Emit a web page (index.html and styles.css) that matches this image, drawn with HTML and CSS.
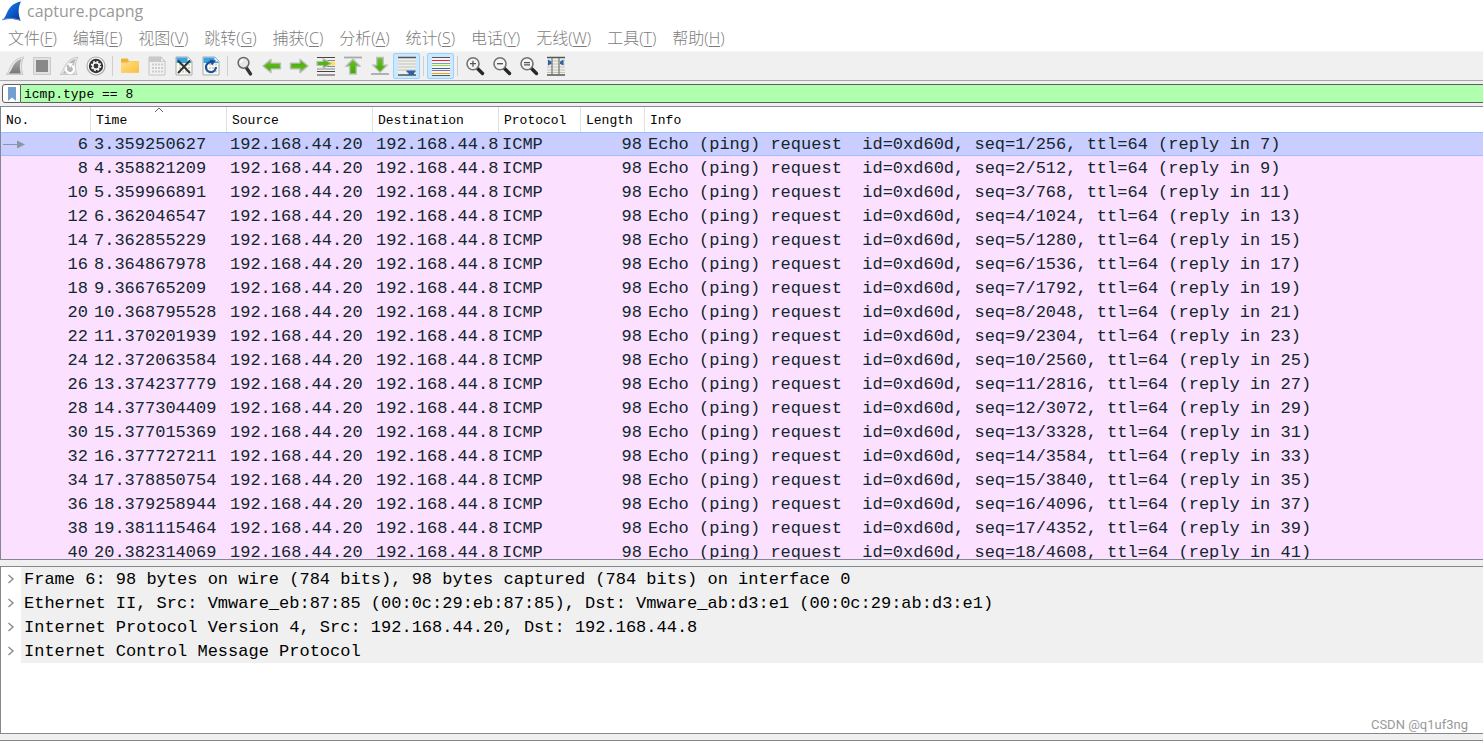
FILE: index.html
```html
<!DOCTYPE html>
<html lang="zh-CN">
<head>
<meta charset="utf-8">
<title>capture.pcapng</title>
<link rel="stylesheet" href="styles.css">
</head>
<body>
<svg class="defs" aria-hidden="true">
  <defs>
    <linearGradient id="blue" x1="0" y1="0" x2="1" y2="1"><stop offset="0" stop-color="#2a8cf0"/><stop offset=".6" stop-color="#0b57c8"/><stop offset="1" stop-color="#06308c"/></linearGradient>
    <linearGradient id="grey" x1="0" y1="0" x2="0" y2="1"><stop offset="0" stop-color="#adadad"/><stop offset="1" stop-color="#777"/></linearGradient>
    <linearGradient id="gold" x1="0" y1="0" x2="1" y2="1"><stop offset="0" stop-color="#ffe08a"/><stop offset="1" stop-color="#fbbf3c"/></linearGradient>
    <linearGradient id="green" x1="0" y1="0" x2="0" y2="1"><stop offset="0" stop-color="#6cc02c"/><stop offset="1" stop-color="#3fa800"/></linearGradient>
    <g id="digits" fill="none" stroke-width="2"><path d="M5 8.5h11M5 12h11M5 15.5h11" stroke-dasharray="2 1"/></g>
    <g id="page"><path d="M2 1h12l4 4v14H2z" fill="#fbfbf1" stroke="#aaa"/><path d="M2.5 1.5h11.3l3.7 3.7V7h-15z" fill="#39a5df"/><path d="M13.5 1v4.5H18z" fill="#e8f4fb"/><use href="#digits" stroke="#d3d3cc"/></g>
    <g id="lens"><path d="M12.5 12.5l5 5" stroke="#282828" stroke-width="3.4" stroke-linecap="round"/><circle cx="8" cy="7.7" r="6" fill="#f4f4f4" stroke="#747474" stroke-width="1.6"/></g>
    <path id="arrow" d="M1 10L9 3.4v3.7h9.5v5.8H9v3.7z" fill="url(#green)" stroke="#b9beb7" stroke-width="1.4" stroke-linejoin="round"/>
  </defs>
</svg>

<header class="titlebar">
  <svg class="logo" viewBox="0 0 20 20"><path d="M0 19C6 16 4 3 19 0.5C16 6 16 13 18.5 19.5C12 17.5 6 17.5 0 19z" fill="url(#blue)"/><path d="M0 19c6-2.500 12-2 18.500.5" fill="none" stroke="#6b89bd" stroke-width="1"/></svg>
  <h1 class="title">capture.pcapng</h1>
</header>

<nav class="menubar">
  <button class="menu">文件(<u>F</u>)</button>
  <button class="menu">编辑(<u>E</u>)</button>
  <button class="menu">视图(<u>V</u>)</button>
  <button class="menu">跳转(<u>G</u>)</button>
  <button class="menu">捕获(<u>C</u>)</button>
  <button class="menu">分析(<u>A</u>)</button>
  <button class="menu">统计(<u>S</u>)</button>
  <button class="menu">电话(<u>Y</u>)</button>
  <button class="menu">无线(<u>W</u>)</button>
  <button class="menu">工具(<u>T</u>)</button>
  <button class="menu">帮助(<u>H</u>)</button>
</nav>

<div class="toolbar" role="toolbar">
  <button class="tool" aria-label="Start capture"><svg viewBox="0 0 20 20"><path d="M1 18.500C5.500 15 5 3 19 1C15.500 7 16 13 18 18.500z" fill="#e6e6e6" stroke="#c9c9c9"/><path d="M3.500 17.500C8 14 7 6 16.500 3C14.200 8 14.500 13 15.800 17.500z" fill="url(#grey)"/></svg></button>
  <button class="tool" aria-label="Stop capture"><svg viewBox="0 0 20 20"><path d="M1.500 1.500h17v17h-17z" fill="#e2e2e2" stroke="#c9c9c9"/><path d="M4 4h12v12H4z" fill="#888"/></svg></button>
  <button class="tool" aria-label="Restart capture"><svg viewBox="0 0 20 20"><path d="M1 18.500C5.500 15 5 3 19 1C15.500 7 16 13 18 18.500z" fill="#e6e6e6" stroke="#c9c9c9"/><path d="M3.500 17.500C8 14 7 6 16.500 3C14.200 8 14.500 13 15.800 17.500z" fill="#b5b5b5"/><path d="M7.600 11a4 4 0 1 0 5.500-1.200" fill="none" stroke="#fff" stroke-width="2.200"/><path d="M8.500 7.500l5.500-.5-2.500 5z" fill="#fff"/></svg></button>
  <button class="tool" aria-label="Capture options"><svg viewBox="0 0 20 20"><circle cx="10" cy="10" r="9" fill="#fafafa" stroke="#a9a9a9" stroke-width="1.200"/><circle cx="10" cy="10" r="7.200" fill="#333"/><circle cx="10" cy="10" r="4" fill="none" stroke="#f4f4f4" stroke-width="2.600" stroke-dasharray="1.600 1.542"/><circle cx="10" cy="10" r="3.200" fill="none" stroke="#f4f4f4" stroke-width="1.500"/><circle cx="10" cy="10" r="2" fill="#3b3b3b"/></svg></button>
  <span class="sep"></span>
  <button class="tool" aria-label="Open"><svg viewBox="0 0 20 20"><path d="M1 3.500Q1 2.500 2 2.500h5.500L9 5h9q1 0 1 1v10.500H1z" fill="#efb234"/><path d="M1 6.500h6l2-1.200h10v11.200H1z" fill="url(#gold)"/></svg></button>
  <button class="tool" aria-label="Save"><svg viewBox="0 0 20 20"><path d="M2 1h12l4 4v14H2z" fill="#f2f2f2" stroke="#c4c4c4"/><path d="M2 1h12v5H2z" fill="#c9c9c9"/><path d="M13.500 1v4.500H18z" fill="#eee" stroke="#bbb" stroke-width=".6"/><use href="#digits" stroke="#ccc"/></svg></button>
  <button class="tool" aria-label="Close"><svg viewBox="0 0 20 20"><use href="#page"/><path d="M4.500 5l11 11.500M15.500 5l-11 11.500" stroke="#2d3436" stroke-width="2" stroke-linecap="round"/></svg></button>
  <button class="tool" aria-label="Reload"><svg viewBox="0 0 20 20"><use href="#page"/><path d="M11 6.300A5 5 0 1 0 14.900 11" fill="none" stroke="#1d4e9e" stroke-width="2.100"/><path d="M8.500 3.500l6.500 1-4 5z" fill="#1d4e9e"/></svg></button>
  <span class="sep"></span>
  <button class="tool" aria-label="Find"><svg viewBox="0 0 20 20"><path d="M11.500 12l4 6" stroke="#333" stroke-width="3.200" stroke-linecap="round"/><circle cx="8.500" cy="6.800" r="5.400" fill="#e6e6e6" stroke="#666" stroke-width="1.500"/><path d="M5.500 7a3.200 3.200 0 0 1 3-3" stroke="#fff" stroke-width="1.500" fill="none"/></svg></button>
  <button class="tool" aria-label="Previous packet"><svg viewBox="0 0 20 20"><use href="#arrow"/></svg></button>
  <button class="tool" aria-label="Next packet"><svg viewBox="0 0 20 20"><use href="#arrow" transform="rotate(180 10 10)"/></svg></button>
  <button class="tool" aria-label="Go to packet"><svg viewBox="0 0 20 20"><path d="M1 1.500h18M1 15.500h18M1 19h18" stroke="#444" stroke-width="1.200"/><path d="M11 4.500h8M11 10.500h8M1 13h18" stroke="#888"/><path d="M13 7.500h6" stroke="#ffe14a" stroke-width="3.500"/><path d="M1 5.500h6V2.500l8 5-8 5V9.500H1z" fill="#54b516" stroke="#b9beb7" stroke-width="1.200"/></svg></button>
  <button class="tool" aria-label="First packet"><svg viewBox="0 0 20 20"><path d="M1 1.500h18" stroke="#aaa" stroke-width="1.800"/><path d="M10 3.200l7 7h-3.800V18H6.800v-7.800H3z" fill="url(#green)" stroke="#b9beb7" stroke-width="1.300"/></svg></button>
  <button class="tool" aria-label="Last packet"><svg viewBox="0 0 20 20"><path d="M1 18h18" stroke="#aaa" stroke-width="1.800"/><path d="M10 16.200l7-7h-3.800V1.500H6.800v7.700H3z" fill="url(#green)" stroke="#b9beb7" stroke-width="1.300"/></svg></button>
  <button class="tool on" aria-label="Auto scroll" aria-pressed="true"><svg viewBox="0 0 20 20"><path d="M1 2h18v16H1z" fill="#eef0ea"/><path d="M1 1.500h18M1 19h18" stroke="#555" stroke-width="1.300"/><path d="M1 5h18M1 8h18M1 11h18M1 14h18" stroke="#bfc3bd"/><path d="M9.500 14.500h9v1.500l-1.500 1v2h-5.500v-2l-2-1z" fill="#2b62a8"/></svg></button>
  <span class="sep"></span>
  <button class="tool on" aria-label="Colorize" aria-pressed="true"><svg viewBox="0 0 20 20"><path d="M1 1h18v18H1z" fill="#f6f6f6"/><path d="M1 1.500h18M1 19.500h18" stroke="#555"/><path d="M1 4.500h18" stroke="#ef2929"/><path d="M1 7.500h18" stroke="#729fcf"/><path d="M1 9.500h18" stroke="#8ae234"/><path d="M1 12.500h18" stroke="#3465a4"/><path d="M1 14.500h18" stroke="#916b9d"/><path d="M1 17.500h18" stroke="#d9a514"/></svg></button>
  <span class="sep"></span>
  <button class="tool" aria-label="Zoom in"><svg viewBox="0 0 20 20"><use href="#lens"/><path d="M5 7.700h6M8 4.700v6" stroke="#555" stroke-width="1.300"/></svg></button>
  <button class="tool" aria-label="Zoom out"><svg viewBox="0 0 20 20"><use href="#lens"/><path d="M5 7.700h6" stroke="#555" stroke-width="1.400"/></svg></button>
  <button class="tool" aria-label="Normal size"><svg viewBox="0 0 20 20"><use href="#lens"/><path d="M5 6.600h6M5 8.800h6" stroke="#555" stroke-width="1.300"/></svg></button>
  <button class="tool" aria-label="Resize columns"><svg viewBox="0 0 20 20"><path d="M1 2h18v16H1z" fill="#efefe9"/><path d="M1 5h18M1 8h18M1 11h18M1 14h18M1 16.500h18" stroke="#c2c4be"/><path d="M1 1.500h18M1 19h18" stroke="#555" stroke-width="1.300"/><path d="M6 2v17M13 2v17" stroke="#777" stroke-width="1.200"/><path d="M2 3.500l3.500 2.200v2L2 9.500zM17.500 3.500L14 5.700v2l3.500 1.800z" fill="#2b62a8"/></svg></button>
</div>

<form class="filterbar">
  <button class="bookmark" type="button" aria-label="Bookmarks"><svg viewBox="0 0 10 14"><path d="M1 0h8v14L5 10.500 1 14z" fill="#729fcf"/></svg></button>
  <input class="filter" type="text" value="icmp.type == 8" aria-label="Display filter" spellcheck="false">
</form>

<main class="panes">
  <section class="pane packets">
    <table class="list">
      <colgroup><col class="c-no"><col class="c-time"><col class="c-src"><col class="c-dst"><col class="c-proto"><col class="c-len"><col></colgroup>
      <thead><tr><th>No.</th><th class="sorted">Time<svg class="sort" viewBox="0 0 10 6"><path d="M1 5l4-4 4 4" fill="none" stroke="#666"/></svg></th><th>Source</th><th>Destination</th><th>Protocol</th><th>Length</th><th>Info</th></tr></thead>
      <tbody>
        <tr class="selected"><td class="num mark"><svg class="pointer" viewBox="0 0 22 8"><path d="M0 4.500h15" stroke="#8a96a0"/><path d="M14 .5l8 4-8 4z" fill="#8a96a0"/></svg>6</td><td>3.359250627</td><td>192.168.44.20</td><td>192.168.44.8</td><td>ICMP</td><td class="num">98</td><td>Echo (ping) request  id=0xd60d, seq=1/256, ttl=64 (reply in 7)</td></tr>
        <tr><td class="num">8</td><td>4.358821209</td><td>192.168.44.20</td><td>192.168.44.8</td><td>ICMP</td><td class="num">98</td><td>Echo (ping) request  id=0xd60d, seq=2/512, ttl=64 (reply in 9)</td></tr>
        <tr><td class="num">10</td><td>5.359966891</td><td>192.168.44.20</td><td>192.168.44.8</td><td>ICMP</td><td class="num">98</td><td>Echo (ping) request  id=0xd60d, seq=3/768, ttl=64 (reply in 11)</td></tr>
        <tr><td class="num">12</td><td>6.362046547</td><td>192.168.44.20</td><td>192.168.44.8</td><td>ICMP</td><td class="num">98</td><td>Echo (ping) request  id=0xd60d, seq=4/1024, ttl=64 (reply in 13)</td></tr>
        <tr><td class="num">14</td><td>7.362855229</td><td>192.168.44.20</td><td>192.168.44.8</td><td>ICMP</td><td class="num">98</td><td>Echo (ping) request  id=0xd60d, seq=5/1280, ttl=64 (reply in 15)</td></tr>
        <tr><td class="num">16</td><td>8.364867978</td><td>192.168.44.20</td><td>192.168.44.8</td><td>ICMP</td><td class="num">98</td><td>Echo (ping) request  id=0xd60d, seq=6/1536, ttl=64 (reply in 17)</td></tr>
        <tr><td class="num">18</td><td>9.366765209</td><td>192.168.44.20</td><td>192.168.44.8</td><td>ICMP</td><td class="num">98</td><td>Echo (ping) request  id=0xd60d, seq=7/1792, ttl=64 (reply in 19)</td></tr>
        <tr><td class="num">20</td><td>10.368795528</td><td>192.168.44.20</td><td>192.168.44.8</td><td>ICMP</td><td class="num">98</td><td>Echo (ping) request  id=0xd60d, seq=8/2048, ttl=64 (reply in 21)</td></tr>
        <tr><td class="num">22</td><td>11.370201939</td><td>192.168.44.20</td><td>192.168.44.8</td><td>ICMP</td><td class="num">98</td><td>Echo (ping) request  id=0xd60d, seq=9/2304, ttl=64 (reply in 23)</td></tr>
        <tr><td class="num">24</td><td>12.372063584</td><td>192.168.44.20</td><td>192.168.44.8</td><td>ICMP</td><td class="num">98</td><td>Echo (ping) request  id=0xd60d, seq=10/2560, ttl=64 (reply in 25)</td></tr>
        <tr><td class="num">26</td><td>13.374237779</td><td>192.168.44.20</td><td>192.168.44.8</td><td>ICMP</td><td class="num">98</td><td>Echo (ping) request  id=0xd60d, seq=11/2816, ttl=64 (reply in 27)</td></tr>
        <tr><td class="num">28</td><td>14.377304409</td><td>192.168.44.20</td><td>192.168.44.8</td><td>ICMP</td><td class="num">98</td><td>Echo (ping) request  id=0xd60d, seq=12/3072, ttl=64 (reply in 29)</td></tr>
        <tr><td class="num">30</td><td>15.377015369</td><td>192.168.44.20</td><td>192.168.44.8</td><td>ICMP</td><td class="num">98</td><td>Echo (ping) request  id=0xd60d, seq=13/3328, ttl=64 (reply in 31)</td></tr>
        <tr><td class="num">32</td><td>16.377727211</td><td>192.168.44.20</td><td>192.168.44.8</td><td>ICMP</td><td class="num">98</td><td>Echo (ping) request  id=0xd60d, seq=14/3584, ttl=64 (reply in 33)</td></tr>
        <tr><td class="num">34</td><td>17.378850754</td><td>192.168.44.20</td><td>192.168.44.8</td><td>ICMP</td><td class="num">98</td><td>Echo (ping) request  id=0xd60d, seq=15/3840, ttl=64 (reply in 35)</td></tr>
        <tr><td class="num">36</td><td>18.379258944</td><td>192.168.44.20</td><td>192.168.44.8</td><td>ICMP</td><td class="num">98</td><td>Echo (ping) request  id=0xd60d, seq=16/4096, ttl=64 (reply in 37)</td></tr>
        <tr><td class="num">38</td><td>19.381115464</td><td>192.168.44.20</td><td>192.168.44.8</td><td>ICMP</td><td class="num">98</td><td>Echo (ping) request  id=0xd60d, seq=17/4352, ttl=64 (reply in 39)</td></tr>
        <tr><td class="num">40</td><td>20.382314069</td><td>192.168.44.20</td><td>192.168.44.8</td><td>ICMP</td><td class="num">98</td><td>Echo (ping) request  id=0xd60d, seq=18/4608, ttl=64 (reply in 41)</td></tr>
      </tbody>
    </table>
  </section>
  <section class="pane details">
    <ul class="tree">
      <li class="node"><svg class="chev" viewBox="0 0 8 10"><path d="M1.500 1l4.500 4-4.500 4" fill="none" stroke="#8a8a8a" stroke-width="1.400"/></svg><span class="label">Frame 6: 98 bytes on wire (784 bits), 98 bytes captured (784 bits) on interface 0</span></li>
      <li class="node"><svg class="chev" viewBox="0 0 8 10"><path d="M1.500 1l4.500 4-4.500 4" fill="none" stroke="#8a8a8a" stroke-width="1.400"/></svg><span class="label">Ethernet II, Src: Vmware_eb:87:85 (00:0c:29:eb:87:85), Dst: Vmware_ab:d3:e1 (00:0c:29:ab:d3:e1)</span></li>
      <li class="node"><svg class="chev" viewBox="0 0 8 10"><path d="M1.500 1l4.500 4-4.500 4" fill="none" stroke="#8a8a8a" stroke-width="1.400"/></svg><span class="label">Internet Protocol Version 4, Src: 192.168.44.20, Dst: 192.168.44.8</span></li>
      <li class="node"><svg class="chev" viewBox="0 0 8 10"><path d="M1.500 1l4.500 4-4.500 4" fill="none" stroke="#8a8a8a" stroke-width="1.400"/></svg><span class="label">Internet Control Message Protocol</span></li>
    </ul>
  </section>
  <section class="bytes"></section>
</main>
<span class="watermark">CSDN @q1uf3ng</span>
</body>
</html>
```
FILE: styles.css
```css
* { box-sizing: border-box; }
body {
  margin: 0;
  height: 100vh;
  display: flex;
  flex-direction: column;
  overflow: hidden;
  background: #fff;
  font-family: "Open Sans", "Noto Sans CJK SC", sans-serif;
}
button, input { font: inherit; margin: 0; padding: 0; border: 0; background: none; }
.defs { position: absolute; width: 0; height: 0; }

.titlebar { display: flex; align-items: center; gap: 5px; height: 24px; padding: 0 2px 2px; }
.logo { width: 20px; height: 20px; }
.title { margin: 0; font-size: 16px; line-height: 22px; font-weight: 400; color: #999; }

.menubar { display: flex; gap: 16px; height: 27px; padding: 0 8px; }
.menu { font-size: 16px; font-weight: 300; line-height: 28px; color: #7c7c7c; white-space: nowrap; }
.menu u { text-underline-offset: 2px; text-decoration-thickness: 1px; }

.toolbar {
  display: flex;
  align-items: center;
  height: 30px;
  padding: 0 1px;
  background: #f0f0f0;
  border-top: 1px solid #f7f7f7;
  border-bottom: 1px solid #a8a8a8;
}
.tool { display: flex; align-items: center; justify-content: center; width: 27px; height: 26px; border: 1px solid transparent; border-radius: 2px; flex: none; }
.tool svg { width: 20px; height: 20px; flex: none; }
.tool.on { background: #cce8ff; border-color: #99d1ff; }
.sep { width: 1px; height: 20px; margin: 0 3px; background: #cfcfcf; }

.filterbar {
  display: flex;
  height: 25px;
  padding: 3px 0 3px 2px;
  background: #f0f0f0;
}
.bookmark { display: flex; align-items: center; justify-content: center; width: 19px; background: #fff; border: 1px solid #5f5f5f; border-radius: 3px 0 0 3px; }
.bookmark svg { width: 10px; height: 14px; }
.filter {
  flex: 1;
  min-width: 0;
  padding: 1px 3px 0;
  background: #afffaf;
  border: solid #5f5f5f;
  border-width: 1px 0;
  font-family: "Liberation Mono", monospace;
  font-size: 13px;
  color: #000;
  outline: 0;
}

.panes { flex: 1; min-height: 0; display: flex; flex-direction: column; gap: 6px; background: #f0f0f0; }
.pane { min-height: 0; overflow: hidden; background: #fff; border: 1px solid #828790; border-right: 0; }
.packets { flex: 452 1 0; }
.details { flex: 166 1 0; }
.bytes { height: 1px; background: #828790; }

.list { width: 100%; border-collapse: separate; border-spacing: 0; table-layout: fixed; }
.c-no { width: 90px; }
.c-time { width: 136px; }
.c-src { width: 146px; }
.c-dst { width: 126px; }
.c-proto { width: 82px; }
.c-len { width: 64px; }
.list th {
  height: 25px;
  padding: 2px 0 0 5px;
  border-right: 1px solid #e2e2e6;
  font: 400 13px/23px "Liberation Mono", monospace;
  text-align: left;
  color: #000;
}
.list th:last-child { border-right: 0; }
.list .sorted { position: relative; }
.sort { position: absolute; top: 0; left: 50%; width: 10px; height: 6px; margin-left: -5px; }
.list td {
  height: 24px;
  padding: 2px 0 0 3px;
  background: #fce0ff;
  color: #12272e;
  font: 17px/22px "Liberation Mono", monospace;
  white-space: pre;
}
.list .num { text-align: right; padding: 2px 3px 0 0; }
.list .selected td { background: #cacdff; border: solid #99c0ff; border-width: 1px 0; padding-top: 1px; line-height: 21px; }
.mark { position: relative; }
.pointer { position: absolute; left: 2px; top: 7px; width: 22px; height: 8px; }

.tree { margin: 0; padding: 0; list-style: none; }
.node { display: flex; align-items: center; height: 24px; }
.chev { flex: none; width: 8px; height: 10px; margin: 0 6px; }
.label { flex: 1; padding: 2px 0 0 3px; background: #f0f0f0; font: 17px/22px "Liberation Mono", monospace; color: #000; white-space: pre; }

.watermark { position: absolute; right: 15px; bottom: 7px; font: 13px/18px Roboto, sans-serif; color: #999; }
```
